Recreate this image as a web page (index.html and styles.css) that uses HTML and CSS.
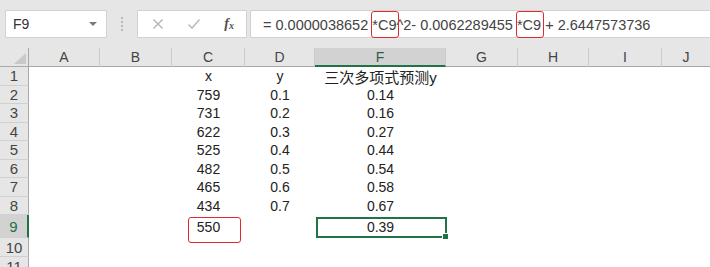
FILE: index.html
```html
<!DOCTYPE html>
<html lang="zh-CN">
  <head>
    <meta charset="UTF-8" />
    <meta name="viewport" content="width=device-width, initial-scale=1.0" />
    <title>三次多项式预测</title>
    <link rel="stylesheet" href="styles.css">
  </head>
  <body>
    <div class="bar">
      <div class="namebox">
        <span>F9</span>
        <i class="caret"></i>
      </div>
      <div class="grip"></div>
      <div class="fnbox">
        <svg class="ico" width="12" height="12" viewBox="0 0 12 12"><path d="M1.5 1.5 L10.5 10.5 M10.5 1.5 L1.5 10.5" stroke="#b4b4b4" stroke-width="1.4" fill="none" /></svg>
        <svg class="ico" width="14" height="12" viewBox="0 0 14 12"><path d="M1.5 6.5 L5 10 L12.5 1.5" stroke="#bdbdbd" stroke-width="1.6" fill="none" /></svg>
        <span class="fx">f<sub>x</sub></span>
      </div>
      <div class="formula">= 0.0000038652 <span class="mark">*C9</span>^2- 0.0062289455 <span class="mark">*C9</span> + 2.6447573736</div>
    </div>

    <div class="sheet">
      <div class="corner"><svg width="12" height="11" viewBox="0 0 12 11"><polygon points="12,0 12,11 0,11" fill="#c9c9c9" /></svg></div>
      <div class="ch">A</div>
      <div class="ch">B</div>
      <div class="ch">C</div>
      <div class="ch">D</div>
      <div class="ch on">F</div>
      <div class="ch">G</div>
      <div class="ch">H</div>
      <div class="ch">I</div>
      <div class="ch last">J</div>

      <div class="rh">1</div>
      <div class="cell c">x</div>
      <div class="cell d">y</div>
      <div class="cell f cjk">三次多项式预测y</div>

      <div class="rh">2</div>
      <div class="cell c">759</div>
      <div class="cell d">0.1</div>
      <div class="cell f">0.14</div>

      <div class="rh">3</div>
      <div class="cell c">731</div>
      <div class="cell d">0.2</div>
      <div class="cell f">0.16</div>

      <div class="rh">4</div>
      <div class="cell c">622</div>
      <div class="cell d">0.3</div>
      <div class="cell f">0.27</div>

      <div class="rh">5</div>
      <div class="cell c">525</div>
      <div class="cell d">0.4</div>
      <div class="cell f">0.44</div>

      <div class="rh">6</div>
      <div class="cell c">482</div>
      <div class="cell d">0.5</div>
      <div class="cell f">0.54</div>

      <div class="rh">7</div>
      <div class="cell c">465</div>
      <div class="cell d">0.6</div>
      <div class="cell f">0.58</div>

      <div class="rh">8</div>
      <div class="cell c">434</div>
      <div class="cell d">0.7</div>
      <div class="cell f">0.67</div>

      <div class="rh on">9</div>
      <div class="cell c circled">550</div>
      <div class="cell f picked">0.39</div>

      <div class="rh">10</div>
      <div class="rh">11</div>
    </div>
  </body>
</html>
```

FILE: styles.css
```css
body {
  margin: 0;
  height: 267px;
  overflow: hidden;
  background: #fff;
  font-family: "Liberation Sans", "Noto Sans CJK SC", sans-serif;
  font-size: 14px;
  color: #222;
}
.bar {
  height: 48px;
  box-sizing: border-box;
  padding: 10px 0 0 5px;
  display: flex;
  align-items: flex-start;
  background: #e6e6e6;
}
.namebox {
  width: 102px;
  height: 28px;
  box-sizing: border-box;
  padding: 0 7px;
  display: flex;
  align-items: center;
  justify-content: space-between;
  background: #fff;
  border: 1px solid #d2d2d2;
  color: #333;
}
.caret {
  width: 0;
  height: 0;
  border-left: 4px solid transparent;
  border-right: 4px solid transparent;
  border-top: 4px solid #7a7a7a;
  margin-right: 2px;
}
.grip {
  width: 30px;
  height: 28px;
  display: flex;
  justify-content: center;
  align-items: center;
}
.grip::after {
  content: "";
  height: 14px;
  border-left: 2px dotted #b8b8b8;
}
.fnbox {
  width: 110px;
  height: 28px;
  box-sizing: border-box;
  padding: 0 12px 0 14px;
  display: flex;
  align-items: center;
  justify-content: space-between;
  background: #fff;
  border: 1px solid #d2d2d2;
}
.fx {
  font-family: "Liberation Serif", serif;
  font-style: italic;
  font-weight: bold;
  font-size: 14px;
  color: #505050;
}
.fx sub {
  font-size: 10px;
  vertical-align: -1px;
}
.formula {
  flex: 1;
  margin-left: 3px;
  height: 28px;
  box-sizing: border-box;
  padding: 1px 0 0 12px;
  display: flex;
  align-items: center;
  white-space: pre;
  background: #fff;
  border: 1px solid #d2d2d2;
  border-right: none;
  font-size: 14.5px;
  color: #444;
}
.mark {
  position: relative;
}
.mark::after {
  content: "";
  position: absolute;
  left: -1px;
  right: -3px;
  top: -6px;
  bottom: -5px;
  border: 1.5px solid #de2a30;
  border-radius: 3px;
}

.sheet {
  display: grid;
  grid-template-columns: 29px 71px 72px 73px 70px 131px 72px 71px 73px 1fr;
  grid-template-rows: 19px repeat(8, 18.5px) 23px 19px 19px;
}
.corner {
  background: #e6e6e6;
  border-right: 1px solid #a8a8a8;
  border-bottom: 1px solid #a8a8a8;
  display: flex;
  justify-content: flex-end;
  align-items: flex-end;
  padding: 0 2px 2px 0;
}
.ch {
  background: #e6e6e6;
  border-right: 1px solid #cbcbcb;
  border-bottom: 1px solid #a8a8a8;
  display: flex;
  justify-content: center;
  align-items: center;
  color: #444;
}
.ch.last {
  border-right: none;
}
.ch.on {
  background: #d2d2d2;
  border-bottom: 2px solid #217346;
  color: #2f5e45;
}
.rh {
  grid-column: 1;
  background: #e6e6e6;
  border-right: 1px solid #a8a8a8;
  border-bottom: 1px solid #d0d0d0;
  display: flex;
  justify-content: center;
  align-items: center;
  color: #444;
  font-size: 15px;
}
.rh.on {
  background: #d2d2d2;
  border-right: 2px solid #217346;
  color: #217346;
}
.cell {
  display: flex;
  justify-content: center;
  align-items: center;
  position: relative;
}
.c {
  grid-column: 4;
}
.d {
  grid-column: 5;
}
.f {
  grid-column: 6;
}
.cjk {
  font-size: 15px;
}
.circled::after {
  content: "";
  position: absolute;
  left: 16px;
  right: 4px;
  top: 2px;
  bottom: -5px;
  border: 1.5px solid #de2a30;
  border-radius: 3px;
}
.picked::before {
  content: "";
  position: absolute;
  left: 1px;
  right: -1px;
  top: 2px;
  bottom: 0;
  border: 2px solid #217346;
}
.picked::after {
  content: "";
  position: absolute;
  right: -3px;
  bottom: -2px;
  width: 5px;
  height: 5px;
  background: #217346;
  border: 1px solid #fff;
}
```
